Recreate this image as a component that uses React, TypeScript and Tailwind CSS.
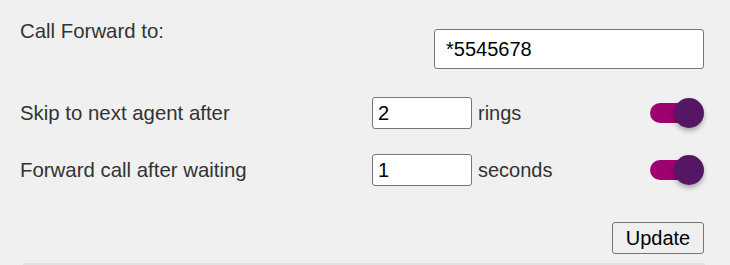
import React from "react";

function Toggle() {
  return (
    <div className="relative w-[54px] h-[30px] flex items-center">
      <div className="w-[50px] h-[20px] rounded-full bg-[#9e026f]" />
      <div className="absolute right-0 top-0 w-[30px] h-[30px] rounded-full bg-[#551764] shadow-[0_3px_5px_rgba(0,0,0,0.3)]" />
    </div>
  );
}

export default function App() {
  return (
    <div className="w-[730px] h-[265px] overflow-hidden bg-[#f0f0f0] pl-5 pr-[26px] pt-5 font-['Liberation_Sans',Arial,sans-serif] text-[20px] leading-[23px] text-[#333333]">
      <div className="flex justify-between items-start">
        <div className="text-[20.4px]">Call Forward to:</div>
        <input
          readOnly
          value="*5545678"
          className="mt-[9px] w-[270px] h-[40px] border border-[#767676] rounded-[3px] bg-white px-[11px] text-black text-[20px] outline-none"
        />
      </div>
      <div className="mt-[28px] h-[32px] flex items-center">
        <div className="w-[352px] text-[20.4px]">Skip to next agent after</div>
        <input
          readOnly
          value="2"
          className="w-[100px] h-[32px] border border-[#767676] rounded-[3px] bg-white pl-[5px] text-black text-[20px] outline-none"
        />
        <div className="ml-[6px] flex-1">rings</div>
        <Toggle />
      </div>
      <div className="mt-[25px] h-[32px] flex items-center">
        <div className="w-[352px] text-[20.4px]">Forward call after waiting</div>
        <input
          readOnly
          value="1"
          className="w-[100px] h-[32px] border border-[#767676] rounded-[3px] bg-white pl-[5px] text-black text-[20px] outline-none"
        />
        <div className="ml-[6px] flex-1">seconds</div>
        <Toggle />
      </div>
      <div className="mt-[36px] flex justify-end">
        <button className="w-[92px] h-[32px] border border-[#767676] rounded-[3px] bg-[#efefef] text-black text-[20px]">
          Update
        </button>
      </div>
      <div className="mt-[9px] ml-[3px] h-[2px] w-[682px] bg-[#e2e2e2]" />
    </div>
  );
}
